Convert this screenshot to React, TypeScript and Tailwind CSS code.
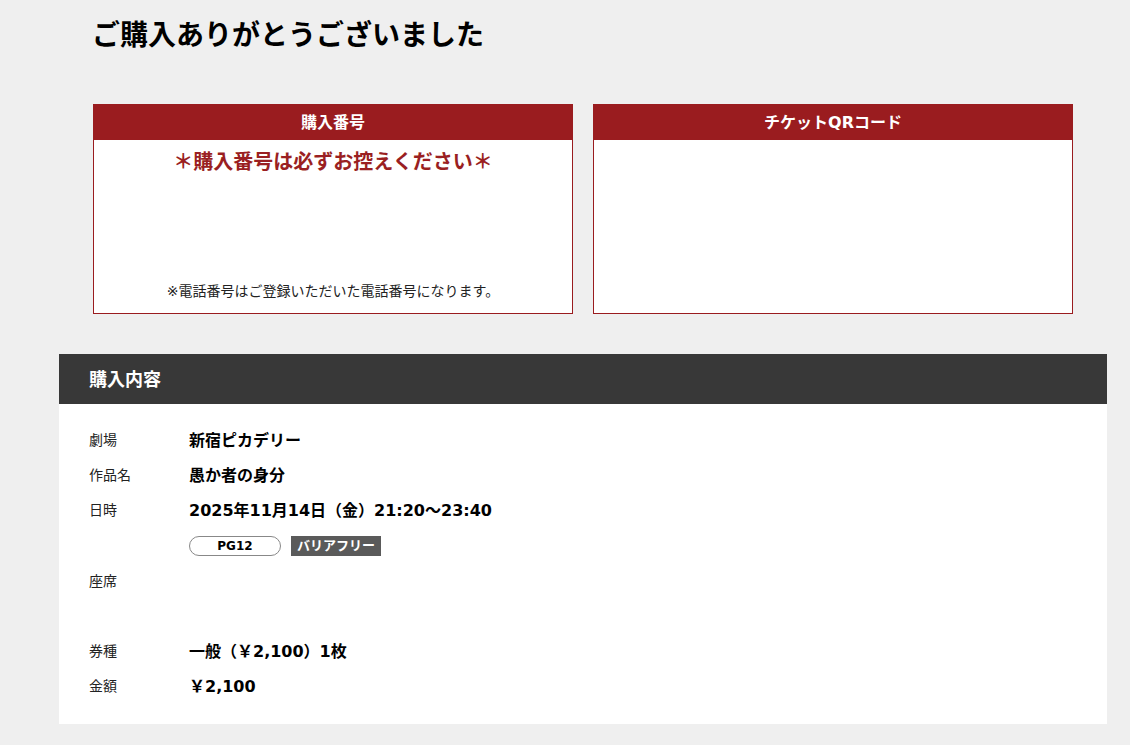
// Purchase complete page: purchase number / QR cards + order summary

const FONT = "font-['DejaVu_Sans','Noto_Sans_CJK_JP',sans-serif]";

interface Row {
  label:  string;
  value?: string;
  height: string;
}

const ROWS: Row[] = [
  { label: '劇場',   value: '新宿ピカデリー', height: 'h-[35px]' },
  { label: '作品名', value: '愚か者の身分',   height: 'h-[35px]' },
  { label: '日時',   value: '2025年11月14日（金）21:20〜23:40', height: 'h-[35px]' },
];

const ROWS_AFTER: Row[] = [
  { label: '座席',                             height: 'h-[70px]' },
  { label: '券種', value: '一般（￥2,100）1枚', height: 'h-[35px]' },
  { label: '金額', value: '￥2,100',            height: 'h-[35px]' },
];

function InfoRow({ row }: { row: Row }) {
  return (
    <div className={`flex items-start ${row.height}`}>
      <span className="w-[100px] shrink-0 text-[14px] leading-[35px] text-[#222]">{row.label}</span>
      {row.value && (
        <span className="text-[16px] font-bold leading-[35px] text-black">{row.value}</span>
      )}
    </div>
  );
}

function Card({ title, children }: { title: string; children?: React.ReactNode }) {
  return (
    <div className="flex h-[210px] w-[480px] flex-col border border-[#9a1c1f] bg-white">
      <div className="flex h-[35px] shrink-0 items-center justify-center bg-[#9a1c1f] text-[16px] font-bold text-white">
        {title}
      </div>
      <div className="flex flex-1 flex-col items-center justify-between pt-[8px] pb-[12px]">
        {children}
      </div>
    </div>
  );
}

export default function App() {
  return (
    <div className={`min-h-[745px] bg-[#efefef] pb-[22px] ${FONT}`}>
      {/* Heading */}
      <h1 className="pl-[92px] pt-[16px] text-[28px] font-bold leading-[40px] text-black">
        ご購入ありがとうございました
      </h1>

      {/* Purchase number / QR */}
      <div className="ml-[93px] mt-[48px] flex gap-[20px]">
        <Card title="購入番号">
          <p className="text-[20px] font-bold leading-[28px] text-[#9a1f22]">
            ＊購入番号は必ずお控えください＊
          </p>
          <p className="text-[14px] leading-[20px] text-[#222]">
            ※電話番号はご登録いただいた電話番号になります。
          </p>
        </Card>
        <Card title="チケットQRコード" />
      </div>

      {/* Order summary */}
      <section className="ml-[59px] mt-[40px] w-[1048px] bg-white">
        <div className="flex h-[50px] items-center bg-[#383838] pl-[30px] text-[18px] font-bold text-white">
          購入内容
        </div>
        <div className="px-[30px] pt-[19px] pb-[20px]">
          {ROWS.map((row) => <InfoRow key={row.label} row={row} />)}
          <div className="flex h-[36px] items-center gap-[10px] pl-[100px]">
            <span className="flex h-[20px] w-[92px] items-center justify-center rounded-full border border-[#888] text-[12px] font-bold text-black">
              PG12
            </span>
            <span className="flex h-[20px] items-center bg-[#5a5a5a] px-[6px] text-[13px] font-bold text-white">
              バリアフリー
            </span>
          </div>
          {ROWS_AFTER.map((row) => <InfoRow key={row.label} row={row} />)}
        </div>
      </section>
    </div>
  );
}
